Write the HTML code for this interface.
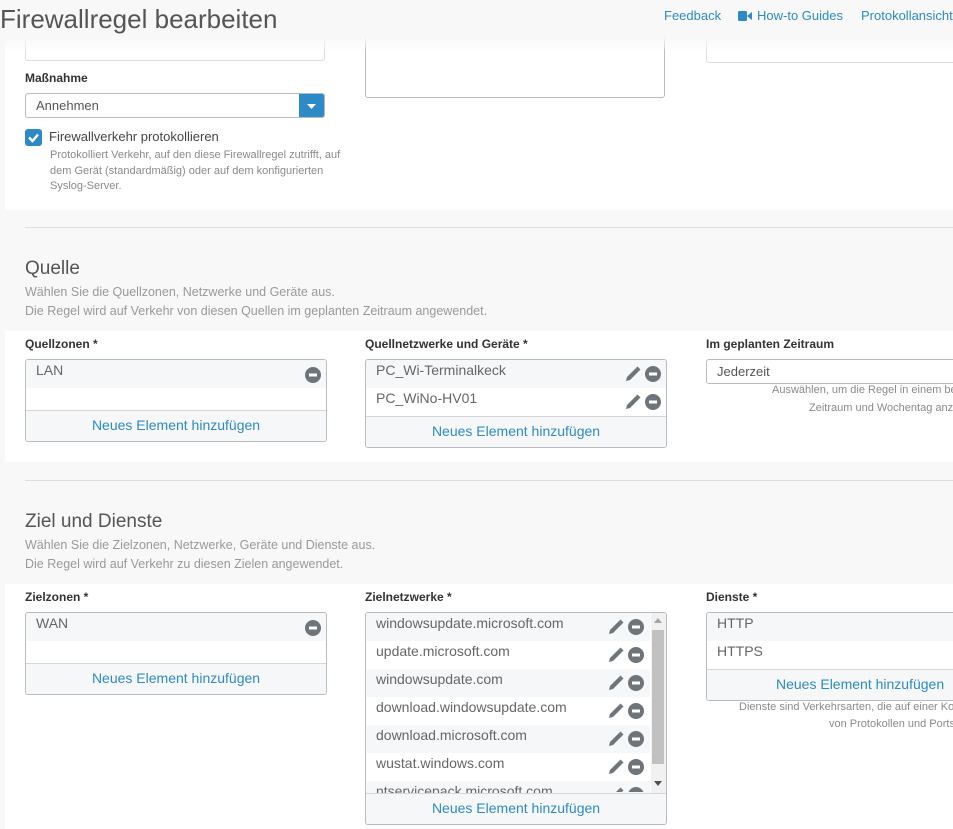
<!DOCTYPE html>
<html><head><meta charset="utf-8"><style>
*{margin:0;padding:0;box-sizing:border-box}
html,body{width:953px;height:829px;overflow:hidden}
body{background:#f8f8f9;font-family:"Liberation Sans",sans-serif;color:#555;position:relative}
#w{position:absolute;left:0;top:0;width:953px;height:829px;overflow:hidden}
.a{position:absolute;white-space:nowrap}
.panel{position:absolute;left:5px;right:0;background:#fff}
.lbl{font-size:12px;font-weight:bold;color:#333}
.box{position:absolute;border:1px solid #b8bcc0;border-radius:3px;background:#fff;overflow:hidden}
.row{position:absolute;left:0;right:0;height:28px;font-size:14px;color:#666;padding:2px 0 0 10px}
.row.g{background:#f6f7f8}
.foot{position:absolute;left:0;right:0;bottom:0;height:31px;border-top:1px solid #d4d6d8;background:#f6f7f8;color:#2d8ac7;font-size:14px;text-align:center;line-height:29px}
.help{font-size:11px;color:#8a8a8a}
.desc{font-size:12.5px;color:#999}
.h2{font-size:19px;color:#555;font-weight:normal}
.ic{position:absolute;top:7px}
.line{position:absolute;left:25px;right:0;height:1px;background:#dcdedf}
</style></head><body><div id="w">

<div class="panel" style="top:40px;height:170px"></div>
<div class="box" style="left:25px;top:30px;width:300px;height:31px;border-color:#dcdde0"></div>
<div class="box" style="left:365px;top:30px;width:300px;height:68px"></div>
<div class="box" style="left:706px;top:30px;width:260px;height:33px;border-color:#dcdde0"></div>
<div class="a" style="left:0;top:0;width:953px;height:52px;background:linear-gradient(#f8f8f9 0,#f8f8f9 36px,rgba(248,248,249,0.6) 44px,rgba(255,255,255,0) 52px)"></div>
<div class="a" style="left:0;top:4px;font-size:26px;color:#555">Firewallregel bearbeiten</div>
<div class="a" style="left:664px;top:8px;font-size:13px;color:#2d8ac7">Feedback</div>
<svg class="a" style="left:738px;top:11px" width="14" height="10"><rect x="0" y="0" width="9" height="10" rx="1.5" fill="#2d8ac7"/><path d="M9 5 L14 1 V9 Z" fill="#2d8ac7"/></svg>
<div class="a" style="left:757px;top:8px;font-size:13px;color:#2d8ac7">How-to Guides</div>
<div class="a" style="left:861px;top:8px;font-size:13px;color:#2d8ac7">Protokollansicht</div>

<div class="a lbl" style="left:25px;top:71px">Maßnahme</div>
<div class="box" style="left:25px;top:93px;width:300px;height:25px"><div class="a" style="left:10px;top:4px;font-size:13px;color:#555">Annehmen</div><div class="a" style="right:0;top:0;width:25px;height:25px;background:#2d8ac7"><svg width="25" height="24"><path d="M8 10 L17 10 L12.5 15Z" fill="#fff"/></svg></div></div>
<svg class="a" style="left:25px;top:129px" width="17" height="17"><rect width="17" height="17" rx="3" fill="#2d8ac7"/><path d="M4 8.5 L7.5 12 L13 5.5" stroke="#fff" stroke-width="2.4" fill="none"/></svg>
<div class="a" style="left:49px;top:129px;font-size:13px;color:#444">Firewallverkehr protokollieren</div>
<div class="a help" style="left:50px;top:148px;line-height:15.5px">Protokolliert Verkehr, auf den diese Firewallregel zutrifft, auf<br>dem Gerät (standardmäßig) oder auf dem konfigurierten<br>Syslog-Server.</div>

<div class="line" style="top:227px"></div>
<div class="a h2" style="left:25px;top:258px">Quelle</div>
<div class="a desc" style="left:25px;top:283px;line-height:19px">Wählen Sie die Quellzonen, Netzwerke und Geräte aus.<br>Die Regel wird auf Verkehr von diesen Quellen im geplanten Zeitraum angewendet.</div>

<div class="panel" style="top:331px;height:131px"></div>
<div class="a lbl" style="left:25px;top:337px">Quellzonen *</div>
<div class="box" style="left:25px;top:359px;width:302px;height:83px">
<div class="row g" style="top:0">LAN<svg class="ic" style="left:279px" width="16" height="16"><circle cx="8" cy="8" r="8" fill="#6d747a"/><rect x="4" y="6.5" width="8" height="3" fill="#fff"/></svg></div>
<div class="foot">Neues Element hinzufügen</div></div>
<div class="a lbl" style="left:365px;top:337px">Quellnetzwerke und Geräte *</div>
<div class="box" style="left:365px;top:359px;width:302px;height:89px">
<div class="row g" style="top:0">PC_Wi-Terminalkeck</div>
<div class="row" style="top:28px">PC_WiNo-HV01</div>
<div class="foot">Neues Element hinzufügen</div></div>
<div class="a lbl" style="left:706px;top:337px">Im geplanten Zeitraum</div>
<div class="box" style="left:706px;top:359px;width:260px;height:25px"><div class="a" style="left:10px;top:4px;font-size:13px;color:#555">Jederzeit</div></div>
<div class="a help" style="left:772px;top:384px">Auswählen, um die Regel in einem best</div>
<div class="a help" style="left:809px;top:402px">Zeitraum und Wochentag anzu</div>

<div class="line" style="top:480px"></div>
<div class="a h2" style="left:25px;top:511px">Ziel und Dienste</div>
<div class="a desc" style="left:25px;top:536px;line-height:19px">Wählen Sie die Zielzonen, Netzwerke, Geräte und Dienste aus.<br>Die Regel wird auf Verkehr zu diesen Zielen angewendet.</div>

<div class="panel" style="top:584px;height:250px"></div>
<div class="a lbl" style="left:25px;top:590px">Zielzonen *</div>
<div class="box" style="left:25px;top:612px;width:302px;height:83px">
<div class="row g" style="top:0">WAN<svg class="ic" style="left:279px" width="16" height="16"><circle cx="8" cy="8" r="8" fill="#6d747a"/><rect x="4" y="6.5" width="8" height="3" fill="#fff"/></svg></div>
<div class="foot">Neues Element hinzufügen</div></div>
<div class="a lbl" style="left:365px;top:590px">Zielnetzwerke *</div>
<div class="box" style="left:365px;top:612px;width:302px;height:213px">
<div class="row g" style="top:0;right:16px">windowsupdate.microsoft.com</div>
<div class="row" style="top:28px;right:16px">update.microsoft.com</div>
<div class="row g" style="top:56px;right:16px">windowsupdate.com</div>
<div class="row" style="top:84px;right:16px">download.windowsupdate.com</div>
<div class="row g" style="top:112px;right:16px">download.microsoft.com</div>
<div class="row" style="top:140px;right:16px">wustat.windows.com</div>
<div class="row g" style="top:168px;right:16px;height:12px;overflow:hidden">ntservicepack.microsoft.com</div>
<div class="a" style="left:285px;top:0;width:15px;height:181px;background:#f1f1f1"><div class="a" style="left:1px;top:17px;width:12px;height:134px;background:#c1c1c1"></div><svg class="a" style="left:3px;top:5px" width="8" height="5"><path d="M0 5L4 0L8 5Z" fill="#a3a3a3"/></svg><svg class="a" style="left:3px;top:168px" width="8" height="5"><path d="M0 0L4 5L8 0Z" fill="#505050"/></svg></div>
<div class="foot">Neues Element hinzufügen</div></div>
<div class="a lbl" style="left:706px;top:590px">Dienste *</div>
<div class="box" style="left:706px;top:612px;width:260px;height:89px">
<div class="row g" style="top:0">HTTP</div>
<div class="row" style="top:28px">HTTPS</div>
<div class="foot" style="text-align:left;padding-left:69px">Neues Element hinzufügen</div></div>
<div class="a help" style="left:739px;top:701px">Dienste sind Verkehrsarten, die auf einer Kom</div>
<div class="a help" style="left:829px;top:718px">von Protokollen und Ports</div>
</div>
<script>
var icons='<svg width="16" height="16" style="position:absolute;left:0;top:0"><path d="M1 15 L2 11 L11 2 L14 5 L5 14 Z" fill="#6d747a"/><path d="M11 2 L12.5 0.5 L15.5 3.5 L14 5Z" fill="#6d747a"/></svg><svg width="16" height="16" style="position:absolute;left:20px;top:0"><circle cx="8" cy="8" r="8" fill="#6d747a"/><rect x="4" y="6.5" width="8" height="3" fill="#fff"/></svg>';
var W=document.getElementById('w');
function add(boxLeft,boxTop,n,x){for(var i=0;i<n;i++){var d=document.createElement('div');d.className='a';d.style.left=(boxLeft+x)+'px';d.style.top=(boxTop+7+28*i)+'px';d.style.width='36px';d.style.height='16px';d.innerHTML=icons;W.appendChild(d);}}
add(365,359,2,260);add(365,612,6,243);
var d=document.createElement('div');d.className='a';d.style.cssText='left:608px;top:787px;width:36px;height:5px;overflow:hidden';d.innerHTML=icons;W.appendChild(d);
</script>
</body></html>
